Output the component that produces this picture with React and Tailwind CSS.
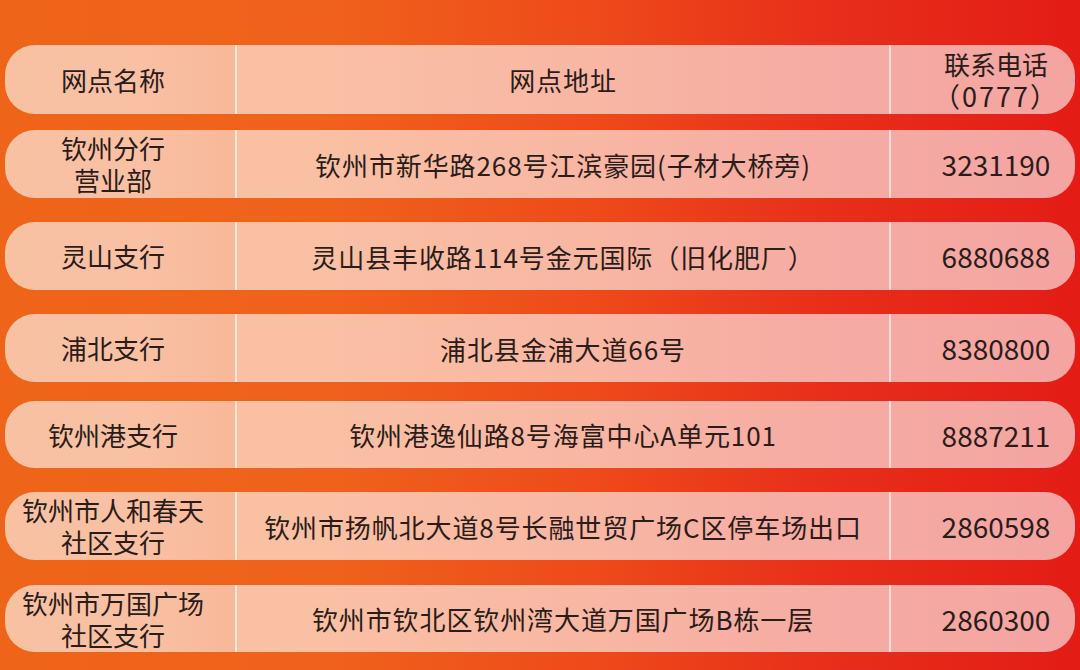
import React from "react";

const rows = [
  { name: ["钦州分行", "营业部"], addr: "钦州市新华路268号江滨豪园(子材大桥旁)", tel: "3231190", mt: "mt-[16px]", h: "h-[68px]" },
  { name: ["灵山支行"], addr: "灵山县丰收路114号金元国际（旧化肥厂）", tel: "6880688", mt: "mt-[24px]", h: "h-[68px]" },
  { name: ["浦北支行"], addr: "浦北县金浦大道66号", tel: "8380800", mt: "mt-[24px]", h: "h-[68px]" },
  { name: ["钦州港支行"], addr: "钦州港逸仙路8号海富中心A单元101", tel: "8887211", mt: "mt-[19px]", h: "h-[67px]" },
  { name: ["钦州市人和春天", "社区支行"], addr: "钦州市扬帆北大道8号长融世贸广场C区停车场出口", tel: "2860598", mt: "mt-[24px]", h: "h-[68px]" },
  { name: ["钦州市万国广场", "社区支行"], addr: "钦州市钦北区钦州湾大道万国广场B栋一层", tel: "2860300", mt: "mt-[25px]", h: "h-[67px]" },
];

function Row({ name, addr, tel, mt, h, header }) {
  return (
    <div
      className={`${mt} ${h} grid grid-cols-[230px_2px_652px_2px_1fr] rounded-[30px] bg-white/60 overflow-hidden`}
    >
      <div className="flex flex-col items-center justify-center pr-[14px] leading-[32px] bg-gradient-to-r from-transparent from-60% to-[#f08a60]/15">
        {name.map((n, i) => (
          <span key={i}>{n}</span>
        ))}
      </div>
      <div className="bg-white/60" />
      <div className="flex items-center justify-center tracking-[0.9px]">{addr}</div>
      <div className="bg-white/60" />
      {header ? (
        <div className="flex flex-col items-center justify-center pl-[26px] leading-[32px]">
          <span>联系电话</span>
          <span className="text-[27px] tracking-[2px]">（0777）</span>
        </div>
      ) : (
        <div className="flex items-center justify-center pl-[26px] text-[28px]">
          <span>{tel}</span>
        </div>
      )}
    </div>
  );
}

export default function App() {
  return (
    <div
      className="w-[1080px] h-[670px] overflow-hidden flex flex-col px-[5px] pt-[45px] text-[26px] text-[#2a1c19] bg-[linear-gradient(90deg,#ee6418_0%,#f0621c_30%,#ee4a1a_55%,#e8301a_75%,#e31c16_100%)]"
      style={{ fontFamily: '"Noto Sans CJK SC", "Noto Sans", sans-serif' }}
    >
      <Row header mt="mt-0" h="h-[69px]" name={["网点名称"]} addr="网点地址" />
      {rows.map((r, i) => (
        <Row key={i} {...r} />
      ))}
    </div>
  );
}
